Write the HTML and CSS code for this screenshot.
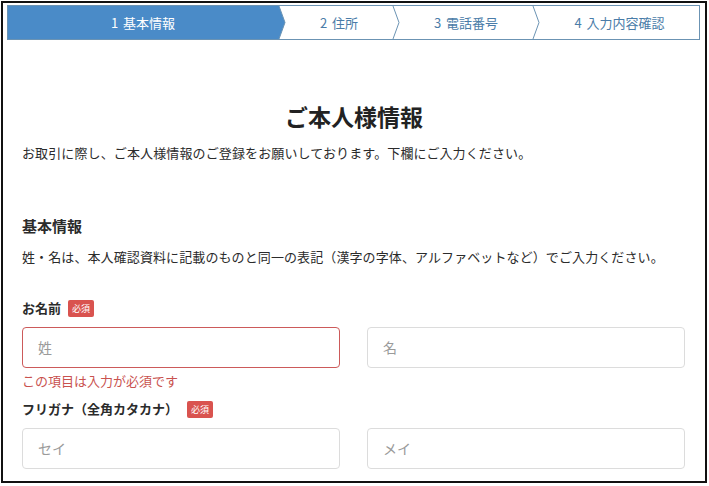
FILE: index.html
```html
<!DOCTYPE html>
<html lang="ja">

<head>
    <meta charset="UTF-8">
    <meta name="viewport" content="width=device-width, initial-scale=1.0">
    <title>ご本人様情報</title>
    <link rel="stylesheet" href="styles.css">
</head>

<body>
    <div class="frame">
        <div class="steps">
            <div class="step step1 active">1 基本情報</div>
            <svg class="sep" width="8" height="33" viewBox="0 0 8 33">
                <polygon points="0,0 1,0 7,16.5 1,33 0,33" fill="#4a8bc8" />
                <polyline points="1,0 7,16.5 1,33" fill="none" stroke="#6b93b3" stroke-width="1" />
            </svg>
            <div class="step step2">2 住所</div>
            <svg class="sep" width="8" height="33" viewBox="0 0 8 33">
                <polyline points="1,0 7,16.5 1,33" fill="none" stroke="#6b93b3" stroke-width="1" />
            </svg>
            <div class="step step3">3 電話番号</div>
            <svg class="sep" width="8" height="33" viewBox="0 0 8 33">
                <polyline points="1,0 7,16.5 1,33" fill="none" stroke="#6b93b3" stroke-width="1" />
            </svg>
            <div class="step step4">4 入力内容確認</div>
        </div>

        <div class="content">
            <h1 class="title">ご本人様情報</h1>
            <p class="lead">お取引に際し、ご本人様情報のご登録をお願いしております。下欄にご入力ください。</p>

            <h2 class="section">基本情報</h2>
            <p class="note">姓・名は、本人確認資料に記載のものと同一の表記（漢字の字体、アルファベットなど）でご入力ください。</p>

            <div class="field">
                <div class="label">お名前<span class="badge">必須</span></div>
                <div class="row">
                    <input class="input error" type="text" placeholder="姓">
                    <input class="input" type="text" placeholder="名">
                </div>
                <div class="error-text">この項目は入力が必須です</div>
            </div>

            <div class="field">
                <div class="label label-kana">フリガナ（全角カタカナ）<span class="badge">必須</span></div>
                <div class="row">
                    <input class="input" type="text" placeholder="セイ">
                    <input class="input" type="text" placeholder="メイ">
                </div>
            </div>
        </div>
    </div>
</body>

</html>
```

FILE: styles.css
```css
* {
    margin: 0;
    padding: 0;
    box-sizing: border-box;
}

body {
    font-family: "Noto Sans CJK JP", "Noto Sans", sans-serif;
    color: #2b2b2b;
    background: #fff;
}

.frame {
    margin: 1px 0 0 1px;
    width: 706px;
    height: 482px;
    border: 2px solid #111;
    overflow: hidden;
}

/* stepper */
.steps {
    display: flex;
    height: 35px;
    margin: 2px 5px 0 4px;
    border: 1px solid #6b93b3;
}

.step {
    font-size: 13px;
    line-height: 33px;
    text-align: center;
    color: #4a7ca8;
    white-space: nowrap;
    word-spacing: 2px;
}

.step.active {
    background-color: #4a8bc8;
    color: #fff;
}

.step1 {
    width: 270px;
}

.step2 {
    width: 106px;
}

.step3 {
    width: 132px;
}

.step4 {
    flex: 1;
}

.sep {
    display: block;
    flex: none;
}

/* content */
.content {
    padding: 0 19px 0 19px;
}

.title {
    margin-top: 61px;
    font-size: 23px;
    line-height: 30px;
    font-weight: bold;
    text-align: center;
    color: #222;
}

.lead {
    margin-top: 12px;
    font-size: 13px;
    line-height: 20px;
    letter-spacing: 0.12px;
}

.section {
    margin-top: 52px;
    font-size: 15px;
    line-height: 22px;
    font-weight: bold;
}

.note {
    margin-top: 10px;
    font-size: 13px;
    line-height: 20px;
    letter-spacing: 0.1px;
}

.field {
    margin-top: 31px;
}

.field + .field {
    margin-top: 8px;
}

.label {
    display: flex;
    align-items: center;
    font-size: 13px;
    line-height: 20px;
    font-weight: bold;
}

.badge {
    display: inline-block;
    margin-left: 7px;
    padding: 0 4px;
    height: 17px;
    line-height: 17px;
    font-size: 9px;
    font-weight: normal;
    color: #fff;
    background-color: #d9534f;
    border-radius: 2px;
}

.label-kana .badge {
    margin-left: 9px;
}

.row {
    display: flex;
    gap: 27px;
    margin-top: 9px;
}

.input {
    width: 318px;
    height: 41px;
    padding: 0 15px 2px;
    border: 1px solid #dcdcdc;
    border-radius: 4px;
    font-family: inherit;
    font-size: 14px;
    color: #333;
    outline: none;
}

.input::placeholder {
    color: #9a9a9a;
}

.input.error {
    border-color: #cc5a5a;
}

.error-text {
    margin-top: 3px;
    font-size: 13px;
    line-height: 20px;
    color: #c9524f;
}
```
